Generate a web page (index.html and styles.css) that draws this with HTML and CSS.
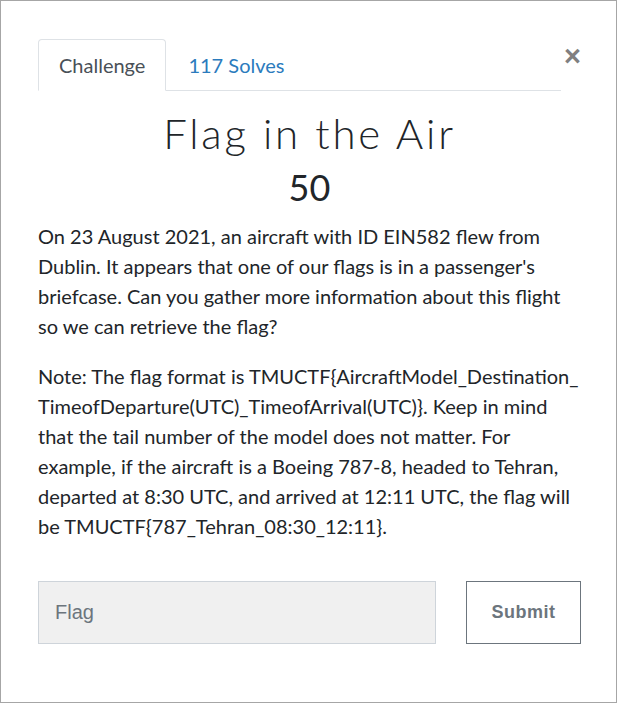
FILE: index.html
```html
<!DOCTYPE html>
<html>
<head>
<meta charset="utf-8">
<link rel="stylesheet" href="styles.css">
</head>
<body>
<div class="modal">
  <div class="header">
    <ul class="tabs">
      <li class="tab active">Challenge</li>
      <li class="tab link">117 Solves</li>
    </ul>
    <div class="close">&times;</div>
  </div>
  <h1 class="title">Flag in the Air</h1>
  <div class="value">50</div>
  <div class="desc">
    <p>On 23 August 2021, an aircraft with ID EIN582 flew from Dublin. It appears that one of our flags is in a passenger's briefcase. Can you gather more information about this flight so we can retrieve the flag?</p>
    <p>Note: The flag format is TMUCTF{AircraftModel_Destination_ TimeofDeparture(UTC)_TimeofArrival(UTC)}. Keep in mind that the tail number of the model does not matter. For example, if the aircraft is a Boeing 787-8, headed to Tehran, departed at 8:30 UTC, and arrived at 12:11 UTC, the flag will be TMUCTF{787_Tehran_08:30_12:11}.</p>
  </div>
  <div class="form">
    <div class="input">Flag</div>
    <div class="submit">Submit</div>
  </div>
</div>
</body>
</html>
```
FILE: styles.css
```css
html, body { margin: 0; padding: 0; background: #fff; }
.modal {
  width: 617px; height: 703px; box-sizing: border-box;
  border: 1px solid #a6a6a6;
  padding: 38px 35px 0 37px;
  font-family: Lato, "Liberation Sans", sans-serif;
  color: #212529;
}
.header { display: flex; align-items: flex-start; }
.tabs {
  flex: 1; display: flex; list-style: none; margin: 0; padding: 0;
  border-bottom: 1px solid #dee2e6;
}
.tab {
  font-size: 20px; line-height: 27px; padding: 12px 20px 11px;
  margin-bottom: -1px; border: 1px solid transparent;
  border-radius: 4px 4px 0 0;
}
.tab.active { color: #495057; border-color: #dee2e6 #dee2e6 #fff; background: #fff; }
.tab.link { color: #2b7bbd; padding-left: 21px; }
.close {
  width: 18px; margin-left: 2px; margin-top: 2px;
  font-family: "Liberation Sans", sans-serif; font-weight: 700;
  font-size: 29px; line-height: 30px; color: #808080; text-align: right;
}
.title {
  margin: 17px 0 0; text-align: center;
  font-weight: 300; font-size: 42px; line-height: 50px; letter-spacing: 2.8px;
  color: #212529;
}
.value { text-align: center; font-size: 36px; line-height: 44px; margin-top: 7px; }
.desc { margin-top: 12px; }
.desc p { margin: 0 0 20px; font-size: 20px; line-height: 30px; }
.form { display: flex; margin-top: 40px; }
.input {
  width: 398px; height: 63px; box-sizing: border-box;
  border: 1px solid #ced4da; background: #f0f0f0;
  font-family: "Liberation Sans", sans-serif; font-size: 20px; color: #6c757d;
  padding-left: 16px; display: flex; align-items: center;
}
.submit {
  margin-left: 30px; width: 115px; height: 63px; box-sizing: border-box;
  border: 1px solid #6c757d; color: #6c757d;
  font-family: "Liberation Sans", sans-serif; font-weight: 700; font-size: 18px;
  letter-spacing: 0.5px;
  display: flex; align-items: center; justify-content: center;
}
```
